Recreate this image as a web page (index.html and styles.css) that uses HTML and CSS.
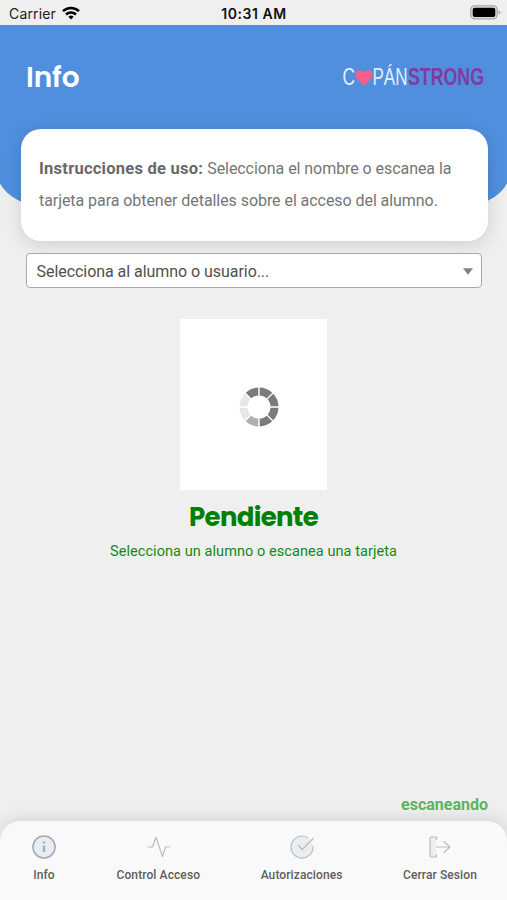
FILE: index.html
```html
<!DOCTYPE html>
<html lang="es">
<head>
<meta charset="utf-8">
<meta name="viewport" content="width=device-width, initial-scale=1">
<title>Info</title>
<link rel="stylesheet" href="styles.css">
</head>
<body>
<div class="app">
  <div class="status">
    <div class="carrier">
      <span>Carrier</span>
      <svg width="18" height="14" viewBox="0 0 18 14" fill="none" stroke="#000" stroke-width="2.5"><path d="M1 5.2a11.4 11.4 0 0 1 16 0"/><path d="M4 8.500a7.200 7.200 0 0 1 10 0"/><path d="M9 13.400l-2.600-2.700a3.700 3.700 0 0 1 5.200 0z" fill="#000" stroke="none"/></svg>
    </div>
    <div class="time">10:31 AM</div>
    <svg class="battery" width="31" height="15" viewBox="0 0 31 15"><rect x=".8" y=".8" width="26.4" height="13" rx="3.8" fill="#dedede" stroke="#a9a9a9" stroke-width="1.3"/><rect x="2.7" y="2.7" width="22.6" height="9.3" rx="2" fill="#000"/><path d="M28.6 5v4.700q1.800-.8 1.800-2.350T28.600 5z" fill="#a9a9a9"/></svg>
  </div>

  <header class="header">
    <h1>Info</h1>
    <svg class="logo" width="144" height="32" viewBox="0 0 144 32">
      <text x="1.500" y="24" class="logo-thin" textLength="12.500" lengthAdjust="spacingAndGlyphs">C</text>
      <path d="M23 24.300c-3.200-2.700-8.500-6.300-8.500-10.800 0-5.300 6.500-6 8.500-2.100 2-3.900 8.500-3.200 8.500 2.100 0 4.500-5.300 8.100-8.500 10.800z" fill="#f65f8a"/>
      <text x="31.500" y="24" class="logo-thin" textLength="35" lengthAdjust="spacingAndGlyphs">PÁN</text>
      <text x="67" y="24" class="logo-bold" textLength="76" lengthAdjust="spacingAndGlyphs">STRONG</text>
    </svg>
  </header>

  <main class="main">
    <section class="card"><b>Instrucciones de uso:</b> <span>Selecciona el nombre o escanea la</span><br><span>tarjeta para obtener detalles sobre el acceso del alumno.</span></section>
    <div class="select">
      <span>Selecciona al alumno o usuario...</span>
      <svg width="10" height="7" viewBox="0 0 10 7"><path d="M0 .3h10L5 6.800z" fill="#808080"/></svg>
    </div>
    <div class="photo">
      <svg width="40" height="40" viewBox="-20 -20 40 40">
        <circle class="seg" r="15.500" pathLength="8" stroke="#7b7b7b" stroke-dasharray="4 4"/>
        <circle class="seg" r="15.500" pathLength="8" stroke="#b0b0b0" stroke-dasharray="1 7" stroke-dashoffset="-4"/>
        <circle class="seg" r="15.500" pathLength="8" stroke="#e7e7e7" stroke-dasharray="2 6" stroke-dashoffset="-5"/>
        <circle class="seg" r="15.500" pathLength="8" stroke="#7b7b7b" stroke-dasharray="1 7" stroke-dashoffset="-7"/>
        <path d="M0-20V20M-20 0H20M-14.500-14.500L14.500 14.500M14.500-14.500L-14.500 14.500" stroke="#fff" stroke-width="1.400"/>
      </svg>
    </div>
    <h2>Pendiente</h2>
    <p class="hint">Selecciona un alumno o escanea una tarjeta</p>
    <p class="scan">escaneando</p>
  </main>

  <nav class="tabs">
    <a class="tab info"><svg width="24" height="24" viewBox="0 0 24 24"><circle cx="12" cy="12" r="11" fill="#e8edf3" stroke-width="1.700"/><path d="M12 10.500V17" stroke-width="2.400"/><path d="M12 6.500v2" stroke-width="2.400"/></svg><span>Info</span></a>
    <a class="tab control"><svg width="24" height="24" viewBox="0 0 24 24"><path d="M2 12h4.500L10 2.300 16.500 21.500 19.500 12h4"/></svg><span>Control Acceso</span></a>
    <a class="tab auth"><svg width="24" height="24" viewBox="0 0 24 24"><circle cx="12" cy="12" r="11" fill="#e9eef2" stroke="none"/><path d="M17.500 2.500A11 11 0 1 0 23 11.500M8.500 10.500l3.700 4L23 3.500"/></svg><span>Autorizaciones</span></a>
    <a class="tab exit"><svg width="24" height="24" viewBox="0 0 24 24"><path d="M2 2h6v20H2z" stroke="none"/><path d="M8.500 4.500V2H3.500q-1.500 0-1.500 1.500v17q0 1.500 1.500 1.500h5v-2.500M8.500 12H22M16 6.500l6 5.500-6 5.500"/></svg><span>Cerrar Sesion</span></a>
  </nav>
</div>
</body>
</html>
```
FILE: styles.css
```css
* { box-sizing: border-box; }
body { margin: 0; background: #efefef; font-family: Roboto, sans-serif; color: #757575; overflow: hidden; }
.app { height: 900px; display: flex; flex-direction: column; overflow: hidden; }
svg { display: block; flex: none; }

.status { height: 25px; padding: 2px 6px 0 9px; display: grid; grid-template-columns: 1fr auto 1fr; align-items: center; font-family: Inter, sans-serif; color: #222; }
.carrier { display: flex; gap: 6px; align-items: center; font-size: 14px; letter-spacing: .15px; }
.carrier svg { margin-top: -2px; }
.time { margin: 0 1px 0 -1px; font-size: 14px; font-weight: 600; letter-spacing: .55px; color: #111; }
.battery { justify-self: end; margin-top: -2px; }

.header { flex: none; height: 179px; margin: 0 -5px; padding: 31px 27px 0 31px; border-radius: 0 0 40px 40px; background: #508ede; display: flex; justify-content: space-between; align-items: flex-start; }
h1 { margin: 0; font: 600 28px/44px Poppins, Inter, sans-serif; letter-spacing: -.1px; color: #fff; }
.logo { margin-top: 5px; overflow: visible; }
.logo-thin { font: 23px "Liberation Sans", sans-serif; fill: #e4eeff; }
.logo-bold { font: bold 23px "Liberation Sans", sans-serif; fill: #7e3d9f; }

.main { flex: 1; margin-top: -75px; display: flex; flex-direction: column; align-items: center; }
.card { width: 467px; height: 112px; margin-left: 1px; padding: 24px 18px 24px 18.500px; border-radius: 20px; background: #fff; box-shadow: 0 4px 18px rgba(0,0,0,.13); font-size: 16px; line-height: 32px; letter-spacing: -.06px; white-space: nowrap; }
.card b { color: #696969; font-size: 16.500px; letter-spacing: .25px; }
.select { width: 456px; height: 35px; margin-top: 12px; padding: 1px 8px 0 10px; border: 1px solid #aaa; border-radius: 4px; background: #fff; display: flex; align-items: center; justify-content: space-between; font-size: 16px; letter-spacing: -.05px; color: #505050; }
.photo { width: 147px; height: 171px; margin-top: 31px; padding: 4px 0 0 10px; background: #fff; display: flex; align-items: center; justify-content: center; }
.seg { fill: none; stroke-width: 8; transform: rotate(-90deg); }
h2 { margin: 9px 0 0; font: 700 26px/36px Poppins, Inter, sans-serif; letter-spacing: -.7px; color: #008000; }
.hint { margin: 7px 0 0; font-size: 14.500px; line-height: 20px; letter-spacing: .07px; color: #148a14; }
.scan { margin: auto 19px 6px; align-self: flex-end; font-size: 16px; line-height: 20px; font-weight: 700; color: #5cb55f; }

.tabs { flex: none; height: 79px; padding: 14px 30px 0 32px; display: flex; justify-content: space-between; border-radius: 20px 20px 0 0; background: #f9f9f9; box-shadow: 0 0 18px rgba(0,0,0,.15); font-size: 12px; font-weight: 500; letter-spacing: .1px; color: #5e5e5e; }
.tab { display: flex; flex-direction: column; align-items: center; gap: 9px; line-height: 14px; white-space: nowrap; }
.tab path { fill: none; }
.tab svg { fill: none; stroke: #b9bdc0; stroke-width: 1.200; stroke-linecap: round; stroke-linejoin: round; }
.info svg { stroke: #a8aeb6; stroke-linecap: butt; }
.exit path:first-child { fill: #e9eef2; }
```
